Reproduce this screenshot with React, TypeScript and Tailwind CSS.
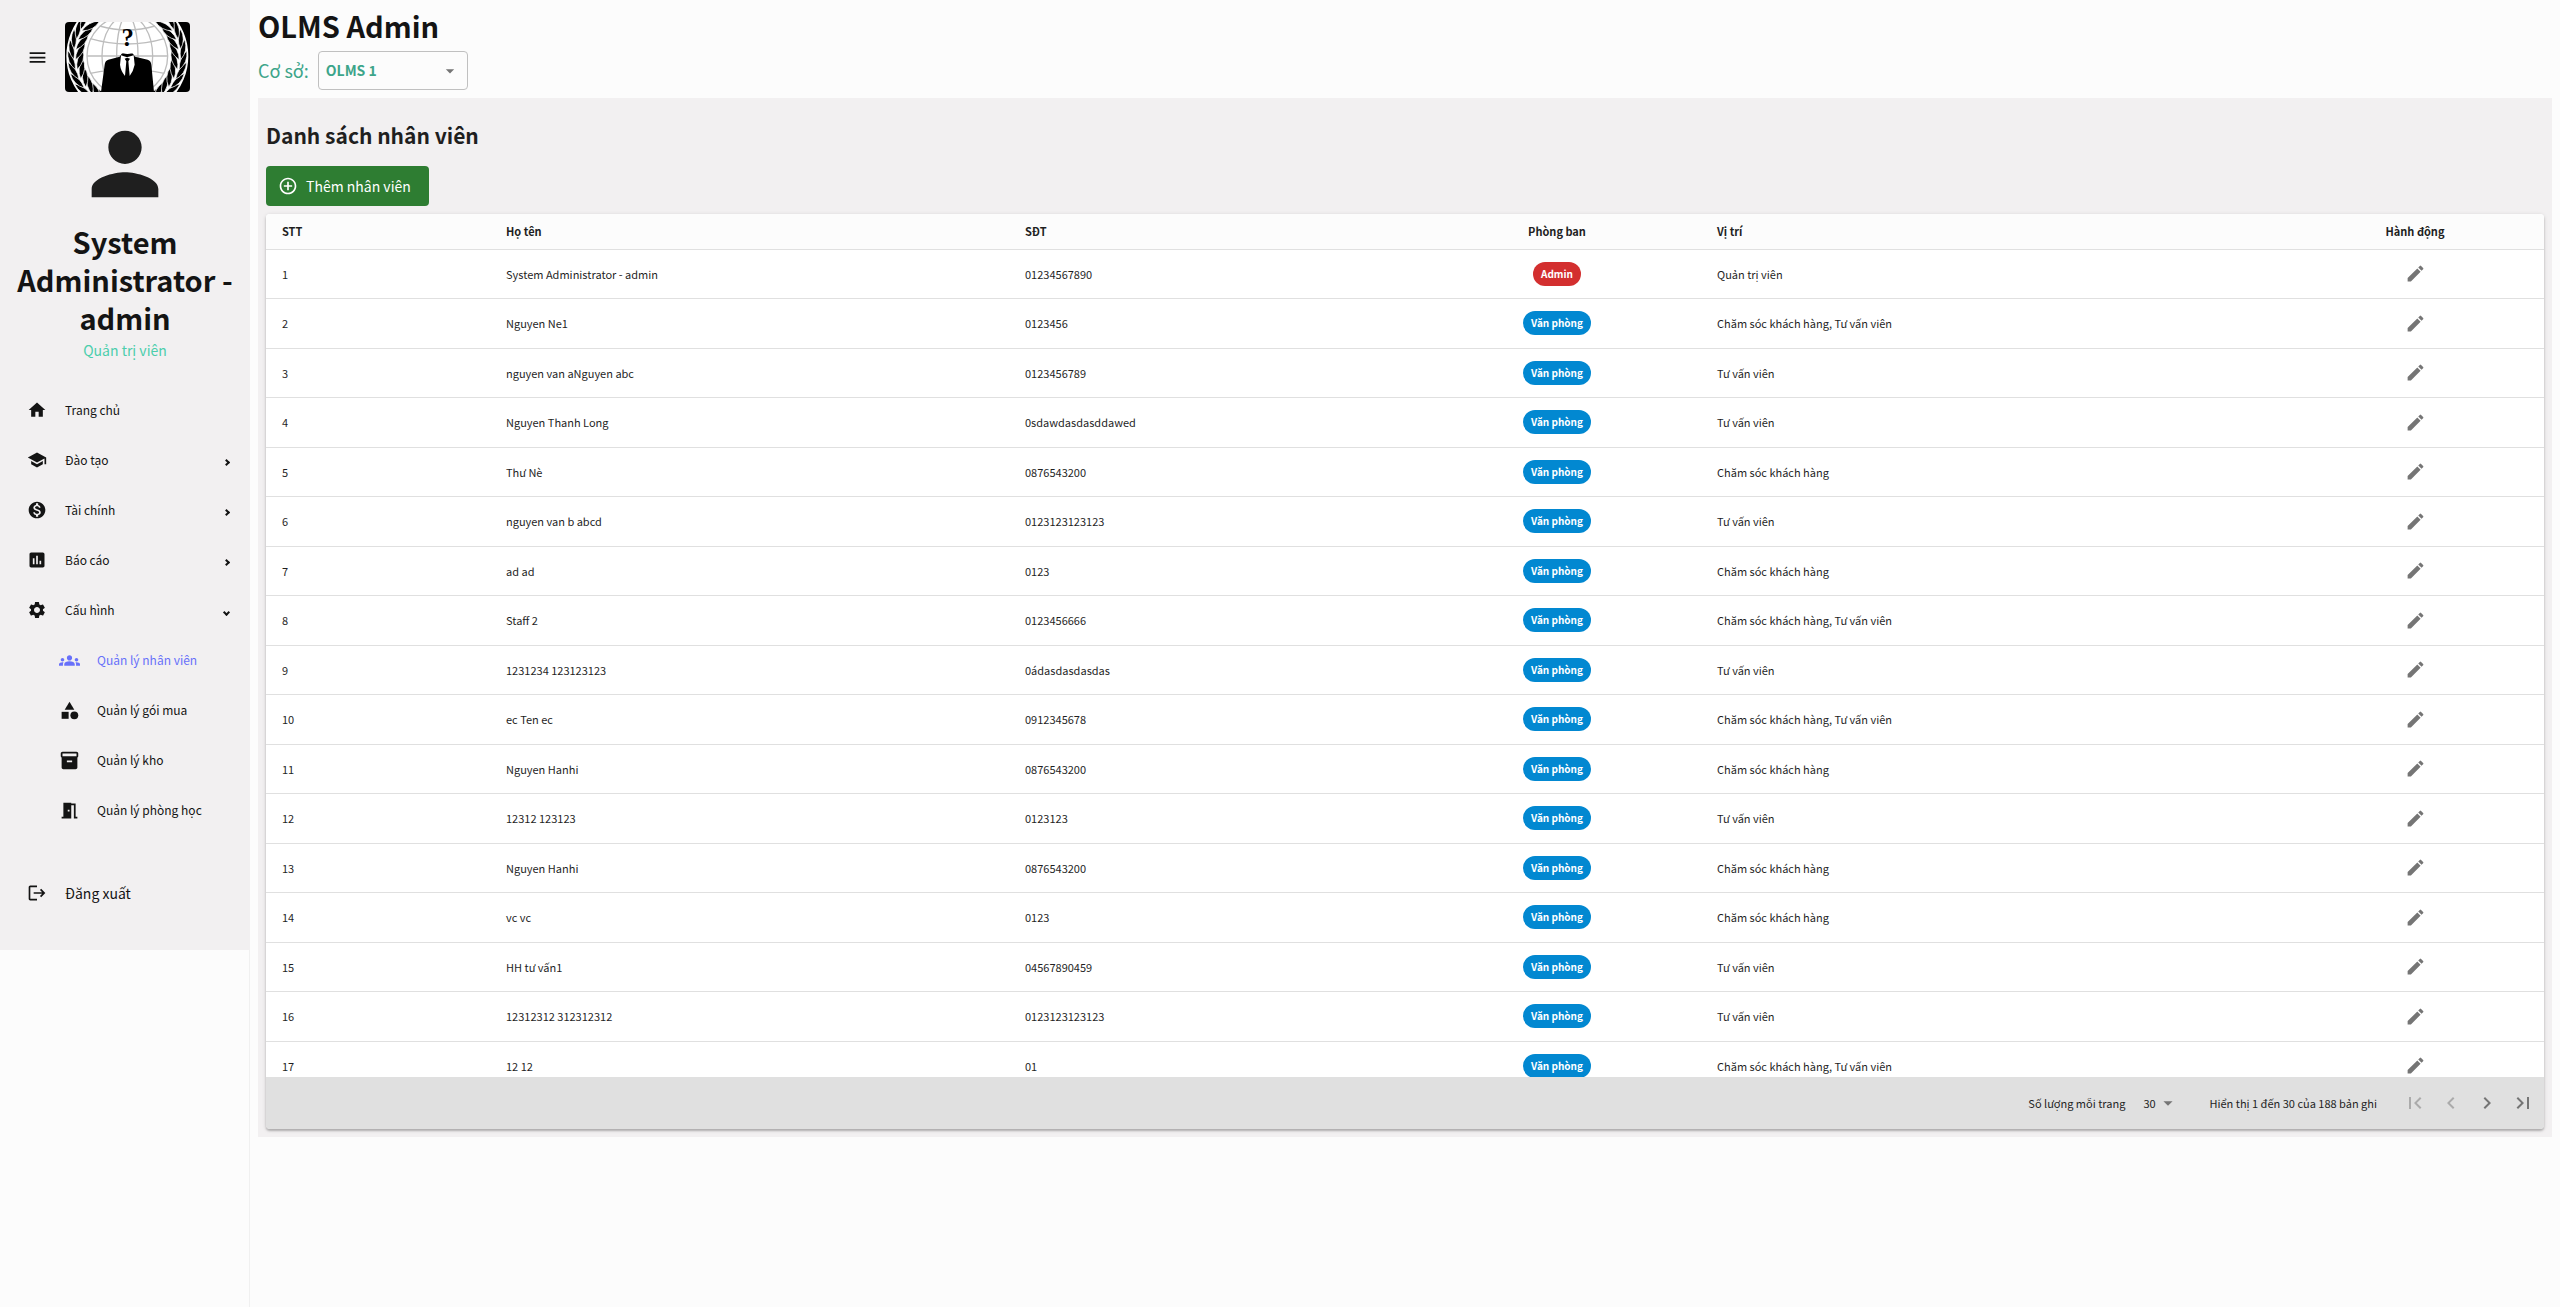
import type { ComponentType, ReactNode } from "react";
import {
  MdAddCircleOutline,
  MdArrowDropDown,
  MdAssessment,
  MdCategory,
  MdChevronLeft,
  MdChevronRight,
  MdEdit,
  MdFirstPage,
  MdGroups,
  MdHome,
  MdInventory2,
  MdLastPage,
  MdLogout,
  MdMeetingRoom,
  MdMenu,
  MdMonetizationOn,
  MdPerson,
  MdSchool,
  MdSettings,
} from "react-icons/md";

type Icon = ComponentType<{ size?: number; className?: string }>;

type Staff = { name: string; phone: string; roles: string };

const CARE = "Chăm sóc khách hàng";
const SALES = "Tư vấn viên";
const BOTH = "Chăm sóc khách hàng, Tư vấn viên";

const staff: Staff[] = [
  { name: "System Administrator - admin", phone: "01234567890", roles: "Quản trị viên" },
  { name: "Nguyen Ne1", phone: "0123456", roles: BOTH },
  { name: "nguyen van aNguyen abc", phone: "0123456789", roles: SALES },
  { name: "Nguyen Thanh Long", phone: "0sdawdasdasddawed", roles: SALES },
  { name: "Thư Nè", phone: "0876543200", roles: CARE },
  { name: "nguyen van b abcd", phone: "0123123123123", roles: SALES },
  { name: "ad ad", phone: "0123", roles: CARE },
  { name: "Staff 2", phone: "0123456666", roles: BOTH },
  { name: "1231234 123123123", phone: "0ádasdasdasdas", roles: SALES },
  { name: "ec Ten ec", phone: "0912345678", roles: BOTH },
  { name: "Nguyen Hanhi", phone: "0876543200", roles: CARE },
  { name: "12312 123123", phone: "0123123", roles: SALES },
  { name: "Nguyen Hanhi", phone: "0876543200", roles: CARE },
  { name: "vc vc", phone: "0123", roles: CARE },
  { name: "HH tư vấn1", phone: "04567890459", roles: SALES },
  { name: "12312312 312312312", phone: "0123123123123", roles: SALES },
  { name: "12 12", phone: "01", roles: BOTH },
];

const LEAF_ANGLES = [-70, -59, -48, -37, -26, -15, -4, 7, 18, 29, 40];

function Wreath() {
  return (
    <g stroke="#fff" strokeWidth="2">
      {LEAF_ANGLES.map((a) => (
        <g key={a} transform={`rotate(${a} 187 102)`}>
          <path d="M29 132 Q4 110 10 74 Q32 96 29 132Z" />
          <path d="M34 132 Q30 100 56 74 Q62 108 34 132Z" />
        </g>
      ))}
    </g>
  );
}

function Logo() {
  return (
    <svg viewBox="0 0 375 210" className="h-[70px] w-[125px] rounded" role="img" aria-label="OLMS">
      <rect width="375" height="210" fill="#000" />
      <circle cx="187" cy="102" r="183" fill="#fff" />
      <g fill="#000">
        <Wreath />
        <g transform="translate(374 0) scale(-1 1)">
          <Wreath />
        </g>
      </g>
      <circle cx="187" cy="102" r="125" fill="#fff" />
      <g fill="none" stroke="#bdbdbd" strokeWidth="4">
        <circle cx="187" cy="102" r="121" />
        <ellipse cx="187" cy="102" rx="76" ry="121" />
        <ellipse cx="187" cy="102" rx="32" ry="121" />
        <path d="M66 102H308" />
        <path d="M76 50Q187 82 298 50" />
        <path d="M104 12Q187 36 270 12" />
        <path d="M76 154Q187 130 298 154" />
      </g>
      <path
        d="M108 210 L119 128 Q120 116 130 113 L164 104 L170 95 Q187 88 204 95 L210 104 L248 113 Q258 116 259 128 L267 210Z"
        fill="#000"
      />
      <path
        d="M168 100 L186 106 L206 100 L209 128 Q205 148 194 162 L190 118 L195 110 L187 107 L179 110 L184 118 L180 162 Q167 146 165 128Z"
        fill="#fff"
      />
      <path d="M174 90 Q187 85 201 90 L201 94 Q187 98 174 94Z" fill="#fff" />
      <text
        x="188"
        y="71"
        fontSize="74"
        fontWeight="700"
        textAnchor="middle"
        fontFamily="Liberation Serif, serif"
        fill="#000"
      >
        ?
      </text>
    </svg>
  );
}

function Chevron({ open }: { open?: boolean }) {
  return (
    <span
      className={
        open
          ? "mt-1 size-[5px] rotate-45 border-r-2 border-b-2 border-[#141414]"
          : "mt-1 size-[5px] -rotate-45 border-r-2 border-b-2 border-[#141414]"
      }
    />
  );
}

function NavItem({ icon: IconEl, label, open }: { icon: Icon; label: string; open?: boolean }) {
  return (
    <li>
      <a href="#" className="flex h-[50px] items-center pr-[21px] pl-[27px]">
        <IconEl size={20} />
        <span className="ml-[18px] flex-1">{label}</span>
        {open !== undefined && <Chevron open={open} />}
      </a>
    </li>
  );
}

function SubItem({ icon: IconEl, label, active }: { icon: Icon; label: string; active?: boolean }) {
  return (
    <li>
      <a
        href="#"
        aria-current={active ? "page" : undefined}
        className={active ? "flex h-[50px] items-center pl-[59px] text-[#6870fa]" : "flex h-[50px] items-center pl-[59px]"}
      >
        <IconEl size={21} />
        <span className="ml-[17px]">{label}</span>
      </a>
    </li>
  );
}

function Sidebar() {
  return (
    <aside className="w-[250px] shrink-0 border-r border-[#f0f0f0]">
      <div className="-mr-px h-[950px] bg-[#f2f0f1]">
        <div className="flex items-center pt-[22px] pl-[27px]">
          <button aria-label="Menu">
            <MdMenu size={21} />
          </button>
          <div className="ml-[17px]">
            <Logo />
          </div>
        </div>
        <div className="flex flex-col items-center pt-[22px]">
          <MdPerson size={100} className="text-[#1f1f1f]" />
          <h2 className="mt-2 px-4 text-center text-[29px] leading-[38px] font-bold">
            System Administrator - admin
          </h2>
          <p className="mt-0.5 text-[14px] leading-6 text-[#4cceac]">Quản trị viên</p>
        </div>
        <nav className="mt-[23px] text-[12px]">
          <ul>
            <NavItem icon={MdHome} label="Trang chủ" />
            <NavItem icon={MdSchool} label="Đào tạo" open={false} />
            <NavItem icon={MdMonetizationOn} label="Tài chính" open={false} />
            <NavItem icon={MdAssessment} label="Báo cáo" open={false} />
            <NavItem icon={MdSettings} label="Cấu hình" open />
            <SubItem icon={MdGroups} label="Quản lý nhân viên" active />
            <SubItem icon={MdCategory} label="Quản lý gói mua" />
            <SubItem icon={MdInventory2} label="Quản lý kho" />
            <SubItem icon={MdMeetingRoom} label="Quản lý phòng học" />
          </ul>
          <button className="mt-[33px] flex h-[50px] items-center pl-[27px] text-[14px]">
            <MdLogout size={20} />
            <span className="ml-[18px]">Đăng xuất</span>
          </button>
        </nav>
      </div>
    </aside>
  );
}

function Th({ children, center }: { children: ReactNode; center?: boolean }) {
  return (
    <th scope="col" className={center ? "px-4 text-center font-bold" : "px-4 text-left font-bold"}>
      {children}
    </th>
  );
}

function StaffTable() {
  return (
    <div className="h-[863px] overflow-hidden rounded-t bg-white">
      <table className="w-full table-fixed border-collapse text-[11px] leading-4 text-[#1f1f1f]">
        <colgroup>
          <col className="w-[224px]" />
          <col className="w-[519px]" />
          <col className="w-[404px]" />
          <col className="w-[288px]" />
          <col className="w-[585px]" />
          <col className="w-[258px]" />
        </colgroup>
        <thead>
          <tr className="h-[35px] border-b border-[#e0e0e0] bg-[#fcfcfc]">
            <Th>STT</Th>
            <Th>Họ tên</Th>
            <Th>SĐT</Th>
            <Th center>Phòng ban</Th>
            <Th>Vị trí</Th>
            <Th center>Hành động</Th>
          </tr>
        </thead>
        <tbody>
          {staff.map((s, i) => (
            <tr key={i} className="border-b border-[#e0e0e0] odd:h-[49px] even:h-[50px]">
              <td className="px-4">{i + 1}</td>
              <td className="px-4">{s.name}</td>
              <td className="px-4">{s.phone}</td>
              <td className="px-4 text-center">
                <span
                  className={
                    i === 0
                      ? "inline-flex h-6 items-center rounded-full bg-[#d32f2f] px-2 text-[10px] font-bold text-white"
                      : "inline-flex h-6 items-center rounded-full bg-[#0288d1] px-2 text-[10px] font-bold text-white"
                  }
                >
                  {i === 0 ? "Admin" : "Văn phòng"}
                </span>
              </td>
              <td className="px-4">{s.roles}</td>
              <td className="px-4 text-center">
                <button aria-label="Sửa" className="align-middle text-[#757575]">
                  <MdEdit size={21} />
                </button>
              </td>
            </tr>
          ))}
        </tbody>
      </table>
    </div>
  );
}

function Pagination() {
  return (
    <div className="flex h-[52px] items-center justify-end rounded-b bg-[#e0e0e0] pr-[9px] text-[11px] text-[#1f1f1f]">
      <label htmlFor="page-size">Số lượng mỗi trang</label>
      <div className="relative ml-4 flex items-center">
        <select id="page-size" className="w-9 appearance-none pl-0.5 text-[11px]">
          <option>30</option>
        </select>
        <MdArrowDropDown size={22} className="pointer-events-none absolute left-4 text-[#757575]" />
      </div>
      <p className="ml-8">Hiển thị 1 đến 30 của 188 bản ghi</p>
      <div className="ml-[26px] flex gap-3 text-[#757575]">
        <button disabled aria-label="Trang đầu" className="text-[#ababab]">
          <MdFirstPage size={24} />
        </button>
        <button disabled aria-label="Trang trước" className="text-[#ababab]">
          <MdChevronLeft size={24} />
        </button>
        <button aria-label="Trang sau">
          <MdChevronRight size={24} />
        </button>
        <button aria-label="Trang cuối">
          <MdLastPage size={24} />
        </button>
      </div>
    </div>
  );
}

export default function App() {
  return (
    <div className="flex min-h-screen bg-[#fcfcfc] font-['Noto_Sans_CJK_SC','Noto_Sans',sans-serif] text-[#141414]">
      <Sidebar />
      <main className="min-w-0 flex-1 px-2">
        <h1 className="pt-1.5 text-[29px] leading-[38px] font-bold">OLMS Admin</h1>
        <div className="mt-[7px] flex items-center text-[#3da58a]">
          <label htmlFor="branch" className="text-[18px]">
            Cơ sở:
          </label>
          <div className="relative ml-[9px] flex items-center">
            <select
              id="branch"
              className="h-[39px] w-[150px] appearance-none rounded border border-[#c0c0c0] pl-[7px] text-[14px] font-bold"
            >
              <option>OLMS 1</option>
            </select>
            <MdArrowDropDown size={20} className="pointer-events-none absolute right-2 text-[#757575]" />
          </div>
        </div>
        <section className="mt-2 bg-[#f2f0f1] px-2 pt-[18px] pb-2">
          <h2 className="text-[21px] leading-[38px] font-bold text-[#1f1f1f]">Danh sách nhân viên</h2>
          <button className="mt-3 flex h-10 items-center rounded bg-[#2e7d32] pr-4 pl-3 text-[14px] text-white">
            <MdAddCircleOutline size={20} />
            <span className="ml-2 pr-0.5">Thêm nhân viên</span>
          </button>
          <div className="mt-2 rounded shadow-[0_2px_2px_rgba(0,0,0,0.2),0_1px_4px_rgba(0,0,0,0.15)]">
            <StaffTable />
            <Pagination />
          </div>
        </section>
      </main>
    </div>
  );
}
